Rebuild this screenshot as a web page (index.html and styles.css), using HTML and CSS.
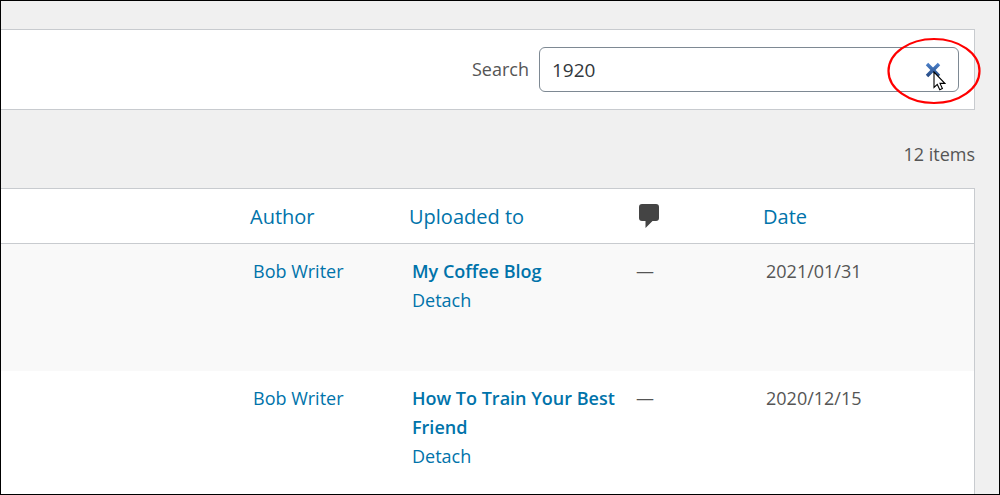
FILE: index.html
```html
<!DOCTYPE html>
<html lang="en">
<head>
    <meta charset="UTF-8">
    <meta name="viewport" content="width=device-width, initial-scale=1.0">
    <title>Media Library</title>
    <link rel="stylesheet" href="styles.css">
</head>
<body>
    <main class="screen">
        <form class="filter-bar">
            <label for="media-search">Search</label>
            <div class="search-box">
                <input type="text" id="media-search" value="1920">
                <button type="reset" class="clear" aria-label="Clear search">
                    <svg width="16" height="16" viewBox="0 0 16 16">
                        <defs>
                            <linearGradient id="blue" x1="0" y1="0" x2="0" y2="1">
                                <stop offset="0" stop-color="#4c82cc"/>
                                <stop offset="1" stop-color="#244780"/>
                            </linearGradient>
                        </defs>
                        <path d="M3.2 .8 8 5.4 12.8 .8 15.2 3.2 10.6 8 15.2 12.8 12.8 15.2 8 10.6 3.2 15.2 .8 12.8 5.4 8 .8 3.2Z" fill="url(#blue)"/>
                    </svg>
                </button>
                <svg class="highlight" width="94" height="68" viewBox="0 0 94 68">
                    <ellipse cx="47" cy="34" rx="45.5" ry="32" fill="none" stroke="#ff0000" stroke-width="2.2"/>
                </svg>
                <svg class="pointer" width="13" height="20" viewBox="0 0 13 20">
                    <path d="M1 1V16.5L4.3 13.4 6.8 18.8 9.4 17.6 7 12.4H11.8Z" fill="#fff" stroke="#000" stroke-width="1.1"/>
                </svg>
            </div>
        </form>
        <p class="count">12 items</p>
        <table class="media">
            <thead>
                <tr>
                    <th class="col-file"></th>
                    <th class="col-author"><a href="#">Author</a></th>
                    <th class="col-parent"><a href="#">Uploaded to</a></th>
                    <th class="col-comments">
                        <a href="#" aria-label="Comments">
                            <svg width="22" height="24" viewBox="0 0 22 24">
                                <path d="M4 0H18Q21 0 21 3V14Q21 17 18 17H14.5L7.5 24V17H4Q1 17 1 14V3Q1 0 4 0Z" fill="#444"/>
                            </svg>
                        </a>
                    </th>
                    <th class="col-date"><a href="#">Date</a></th>
                </tr>
            </thead>
            <tbody>
                <tr>
                    <td></td>
                    <td><a href="#">Bob Writer</a></td>
                    <td><a href="#" class="parent">My Coffee Blog</a><br><a href="#">Detach</a></td>
                    <td>—</td>
                    <td>2021/01/31</td>
                </tr>
                <tr>
                    <td></td>
                    <td><a href="#">Bob Writer</a></td>
                    <td><a href="#" class="parent">How To Train Your Best Friend</a><br><a href="#">Detach</a></td>
                    <td>—</td>
                    <td>2020/12/15</td>
                </tr>
            </tbody>
        </table>
    </main>
</body>
</html>
```
FILE: styles.css
```css
* {
    box-sizing: border-box;
}
body {
    margin: 0;
    background: #f0f0f0;
    color: #555;
    font-family: "Open Sans", "Noto Sans", sans-serif;
    font-size: 18px;
    line-height: 29px;
}
a {
    color: #0073aa;
    text-decoration: none;
}
.screen {
    min-height: 100vh;
    max-height: 100vh;
    overflow: hidden;
    border: 1px solid #000;
    padding: 28px 24px 0 0;
}
.filter-bar {
    display: flex;
    align-items: center;
    justify-content: flex-end;
    gap: 10px;
    padding: 17px 15px;
    background: #fff;
    border: 1px solid #c8cbcf;
    border-left: 0;
}
.search-box {
    position: relative;
    width: 420px;
}
.search-box input {
    display: block;
    width: 100%;
    height: 45px;
    padding: 0 50px 0 12px;
    border: 1px solid #7e8993;
    border-radius: 6px;
    background: #fff;
    color: #32373c;
    font: inherit;
    font-size: 19px;
}
.clear {
    position: absolute;
    top: 15px;
    right: 18px;
    padding: 0;
    border: 0;
    background: none;
    line-height: 0;
}
.highlight {
    position: absolute;
    top: -10px;
    right: -22px;
    pointer-events: none;
}
.pointer {
    position: absolute;
    top: 24px;
    right: 13px;
    pointer-events: none;
}
.count {
    margin: 30px 0 19px;
    text-align: right;
}
.media {
    width: 100%;
    table-layout: fixed;
    border: 1px solid #c8cbcf;
    border-left: 0;
    border-spacing: 0;
    background: #fff;
}
th {
    height: 55px;
    padding: 0 0 0 10px;
    border-bottom: 1px solid #c8cbcf;
    font-size: 20px;
    font-weight: 400;
    text-align: left;
}
td {
    height: 127px;
    padding: 13px 0 13px 13px;
    vertical-align: top;
}
tbody tr:nth-child(odd) {
    background: #f9f9f9;
}
.col-author {
    width: 159px;
}
.col-parent {
    width: 224px;
}
.col-comments {
    width: 130px;
    padding-left: 15px;
}
.col-comments svg {
    display: block;
}
.col-date {
    width: 221px;
}
.parent {
    font-weight: 600;
}
```
